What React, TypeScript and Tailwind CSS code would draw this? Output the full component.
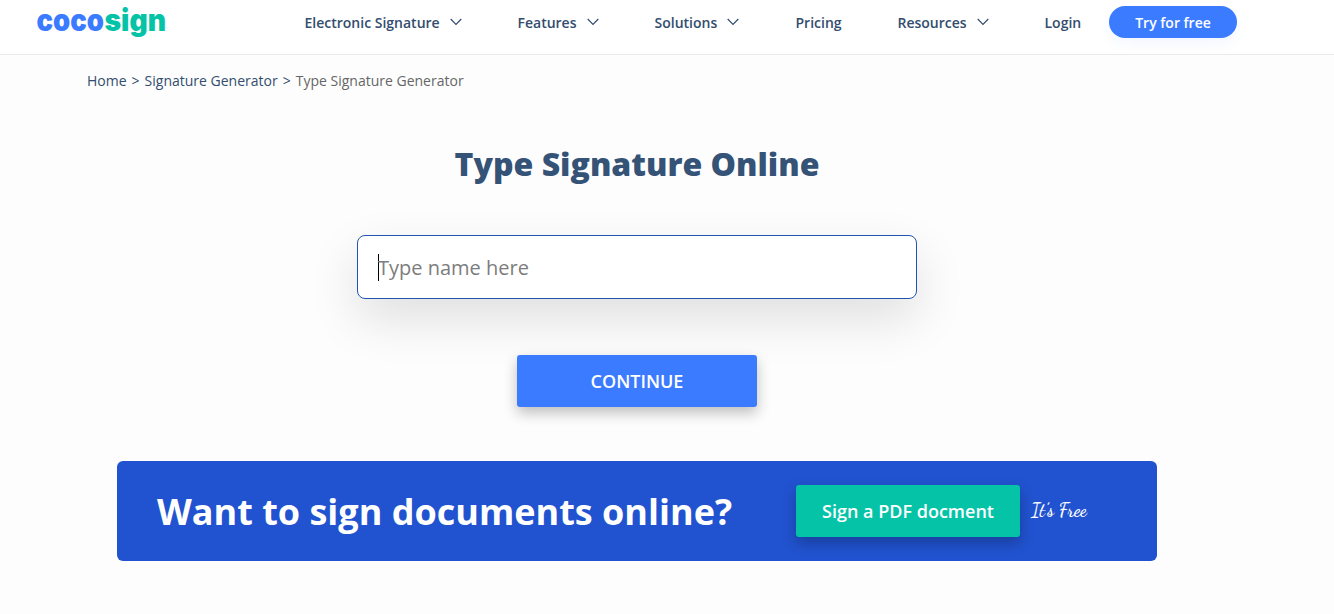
const menu = [
  { label: 'Electronic Signature', dropdown: true, width: 'w-[213px]' },
  { label: 'Features', dropdown: true, width: 'w-[137px]' },
  { label: 'Solutions', dropdown: true, width: 'w-[141px]' },
  { label: 'Pricing', dropdown: false, width: 'w-[102px]' },
  { label: 'Resources', dropdown: true, width: 'w-[147px]' },
];

function Chevron() {
  return (
    <svg width="12" height="8" viewBox="0 0 12 8" fill="none" stroke="#334d6e" strokeWidth="1.2" className="mb-0.5">
      <path d="M0.7 1 L6 6.3 L11.3 1" />
    </svg>
  );
}

function Logo() {
  return (
    <svg
      width="140"
      height="54"
      viewBox="0 0 140 54"
      role="img"
      aria-label="cocosign"
      className="font-['Inter',sans-serif] text-[30px] font-black"
    >
      <text x="0.5" y="30.5" textLength="67.5" lengthAdjust="spacingAndGlyphs" fill="#3b7bff">
        coco
      </text>
      <text x="68.5" y="30.5" textLength="61.5" lengthAdjust="spacingAndGlyphs" fill="#05c3a7">
        sign
      </text>
    </svg>
  );
}

export default function App() {
  return (
    <div className="h-[614px] overflow-hidden bg-[#fdfdfd] font-['Open_Sans',sans-serif] text-[#334d6e]">
      <header className="flex h-[55px] items-start border-b border-[#ebebeb] bg-white pl-9">
        <div className="w-[268.5px]">
          <Logo />
        </div>
        <nav className="flex h-[45px] items-center text-sm font-semibold">
          {menu.map((item) => (
            <a key={item.label} href="#" className={`flex items-center gap-2.5 whitespace-nowrap ${item.width}`}>
              {item.label}
              {item.dropdown && <Chevron />}
            </a>
          ))}
          <a href="#" className="w-[64.5px]">Login</a>
          <a
            href="#"
            className="mb-px flex h-8 w-32 items-center justify-center rounded-full bg-[#3b7bff] pt-0.5 text-white shadow-[0_6px_12px_rgba(59,123,255,0.06)]"
          >
            Try for free
          </a>
        </nav>
      </header>

      <div className="flex gap-[5px] pt-4 pl-[87px] text-sm leading-5">
        <a href="#">Home</a>
        <span>&gt;</span>
        <a href="#">Signature Generator</a>
        <span>&gt;</span>
        <span className="text-[#666]">Type Signature Generator</span>
      </div>

      <main className="ml-[117px] flex w-[1040px] flex-col items-center pt-[49px]">
        <h1 className="text-[32px] leading-[48px] font-extrabold text-[#355277]">Type Signature Online</h1>

        <div className="mt-[47px] flex h-16 w-[560px] items-center rounded-lg border border-[#2153b5] bg-white px-5 shadow-[0_20px_50px_rgba(0,0,0,0.12)]">
          <span className="h-[27px] w-px bg-black" />
          <span className="-ml-px pt-0.5 text-xl text-[#7d7d7d]">Type name here</span>
        </div>

        <button className="relative mt-14 h-[52px] w-60 rounded-[3px] bg-[#3b7bff] text-lg font-semibold text-white shadow-[0_6px_14px_rgba(0,0,0,0.25)]">
          CONTINUE
        </button>

        <section className="mt-[54px] flex h-[100px] w-full items-center rounded-md bg-[#2153d0] pl-10 text-white">
          <h2 className="w-[639px] pt-0.5 text-4xl font-bold whitespace-nowrap">Want to sign documents online?</h2>
          <a
            href="#"
            className="flex h-[52px] w-56 items-center justify-center rounded-[3px] bg-[#05c3a7] text-lg font-semibold shadow-[0_6px_14px_rgba(0,0,0,0.25)]"
          >
            Sign a PDF docment
          </a>
          <span className="ml-[11px] font-['Dancing_Script',cursive] text-[18.5px] font-semibold whitespace-nowrap">It’s Free</span>
        </section>
      </main>
    </div>
  );
}
